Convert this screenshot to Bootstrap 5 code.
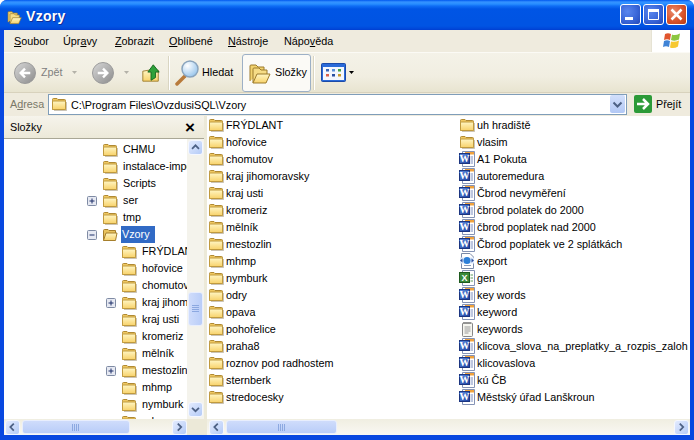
<!DOCTYPE html>
<html lang="cs">
<head>
<meta charset="utf-8">
<title>Vzory</title>
<link href="https://cdn.jsdelivr.net/npm/bootstrap@5.3.0/dist/css/bootstrap.min.css" rel="stylesheet">
<style>
html,body{margin:0;padding:0;background:#fff;overflow:hidden}
body{width:694px;height:440px;font-family:"Liberation Sans",sans-serif;font-size:10.8px;line-height:17px;color:#000}
u{text-decoration:underline;text-underline-offset:1px}
.xpwin{width:694px;height:440px;background:#0848e0;border-radius:7px 7px 0 0;overflow:hidden}
.xptitle{height:30px;flex:none;background:linear-gradient(180deg,#0058ee 0,#3593ff 2px,#288eff 4px,#0f6ef5 6px,#0055e5 9px,#0054e3 20px,#0054e3 26px,#0046d8 29px,#003dd0 30px);padding:3px 0 0 6px;color:#fff}
.xptitle-text{font-family:"Liberation Sans",sans-serif;font-weight:700;font-size:14px;margin-left:4px;text-shadow:1px 1px 0 #0f2f9a;letter-spacing:.3px}
.capbtns{margin-left:auto;margin-right:7px;gap:2px;margin-top:-4px}
.capbtn{width:21px;height:21px;border:1px solid #fff;border-radius:3px;background:radial-gradient(circle at 35% 35%,#5a86ee 0,#3a66d8 55%,#2348b8 100%)}
.capbtn-x{background:radial-gradient(circle at 35% 35%,#e88a6c 0,#d9542b 55%,#b73a14 100%)}
.xpbody{flex:1 1 auto;min-height:0;margin:0 4px 5px;background:#ece9d8}
.menubar{height:23px;flex:none;background:#efebde;border-bottom:1px solid #fbfaf5}
.m1{width:59px;padding-left:10px;flex:none}
.m2{width:52px;flex:none}
.m3{width:54px;flex:none}
.m4{width:59px;flex:none}
.m5{width:56px;flex:none}
.flagbox{margin-left:auto;width:39px;height:22px;background:#fff;border-left:1px solid #e6e3d4}
.toolbar{height:40px;flex:none;background:linear-gradient(180deg,#f4f2e8 0,#f1eee1 60%,#e8e4d0 100%);border-bottom:1px solid #d8d2bd}
.gray-label{color:#808080}
.tbsep{width:2px;height:34px;background:#d9d5c2;border-right:1px solid #fff;flex:none}
.t-back{margin-left:10px}
.t-zpet{margin-left:5px;width:21px;flex:none}
.t-tri1{margin-left:10px}
.t-fwd{margin-left:15px}
.t-tri2{margin-left:10px}
.t-up{margin-left:12px}
.t-sep1{margin-left:7px}
.t-search{margin-left:5px}
.t-hledat{margin-left:2px;width:40px;flex:none}
.t-sep2{margin-left:2px}
.t-views{margin-left:6px}
.t-tri3{margin-left:3px}
.tb-slozky{width:69px;height:38px;background:#fbfaf6;border:1px solid #9db0c6;border-radius:3px;flex:none;padding-left:4px}
.addr{height:23px;flex:none;background:#efebde;border-bottom:1px solid #efebde}
.addr-label{width:44px;padding-left:6px;color:#7a7868;flex:none}
.addr-path{height:17px;line-height:19px}
.addr-input{width:579px;height:21px;background:#fff;border:1px solid #7f9db9;flex:none;padding-left:2px}
.addr-combo{width:15px;height:18px;margin-left:auto;margin-right:1px;background:linear-gradient(180deg,#d3e0fb,#b2c8f5);border-radius:2px}
.gobtn{padding-left:7px}
.panes{flex:1 1 auto;min-height:0}
.leftpane{width:200px;flex:none}
.splitter{width:3px;background:#ece9d8;flex:none}
.rightpane{flex:1 1 auto;min-width:0;background:#fff}
.phead{height:23px;background:linear-gradient(180deg,#f6f4ec,#ece9d8);border-bottom:1px solid #a9a795;padding-left:6px;padding-right:9px;flex:none}
.phead-x{font-family:"Liberation Sans",sans-serif;font-size:17px;font-weight:700;margin-left:auto;line-height:17px}
.treewrap{flex:1 1 auto;min-height:0;background:#fff}
.treeclip{width:183px;overflow:hidden;padding-top:2px;flex:none}
.trow{height:17px;white-space:nowrap}
.lv1{padding-left:83px}
.lv2{padding-left:102px}
.expslot{width:15px;flex:none}
.expbox{width:10px;height:10px}
.tname{margin-left:4px;padding:0 1px}
.tname-sel{background:#316ac5;color:#fff;margin-left:3px;padding:0 2px 0 1px;width:34px;flex:none}
.vscroll{width:17px;flex:none;background:#f4f3ec;padding:1px}
.sbtn{width:15px;height:15px;flex:none;background:linear-gradient(135deg,#e3ebfe,#b4cbf7);border:1px solid #f4f7ff;border-radius:3px}
.vthumb{width:15px;height:34px;background:linear-gradient(90deg,#cfdcfb,#b9cdf8);border:1px solid #e8eefd;border-radius:3px;margin-top:137px;margin-bottom:76px;flex:none}
.hbar{height:16px;flex:none;background:linear-gradient(180deg,#f0eee1,#f9f8f3)}
.hthumb-l{width:108px;height:14px;margin-left:2px;margin-right:42px}
.hthumb-r{width:111px;height:14px;margin-left:2px;margin-right:337px}
.hthumb{background:linear-gradient(180deg,#cfdcfb,#b9cdf8);border:1px solid #e8eefd;border-radius:3px;flex:none}
.hcorner{width:17px;height:16px;background:#ece9d8;flex:none}
.hbar-left{width:183px;flex:none;padding:1px}
.hbar-right{padding:1px 1px 1px 2px}
.filearea{flex:1 1 auto;min-height:0;padding-left:1px}
.fcol{width:251px;flex:none}
.frow{height:17px;white-space:nowrap}
.fname{margin-left:2px;height:17px;line-height:19px}
.ic16{width:16px;height:16px;flex:none}
.ic-up{width:20px;height:24px;flex:none}
.ic-search{width:25px;height:26px;flex:none}
.ic-views{width:25px;height:19px;flex:none}
.ic-big{width:24px;height:24px;flex:none}
.ic-circle{width:22px;height:22px;flex:none}
.ic-go{width:18px;height:18px;flex:none}
.tri{width:5px;height:3px;flex:none}
</style>
</head>
<body>
<svg width="0" height="0" class="d-block" aria-hidden="true">
<defs>
<linearGradient id="gf" x1="0" y1="0" x2="0" y2="1"><stop offset="0" stop-color="#fff6c4"/><stop offset="1" stop-color="#f8d26a"/></linearGradient>
<linearGradient id="gb" x1="0" y1="0" x2="1" y2="1"><stop offset="0" stop-color="#d8d8d8"/><stop offset="1" stop-color="#8b8b8b"/></linearGradient>
<radialGradient id="gg" cx=".35" cy=".3" r=".8"><stop offset="0" stop-color="#fff"/><stop offset="1" stop-color="#8fc0ea"/></radialGradient>
<linearGradient id="gw" x1="0" y1="0" x2="1" y2="1"><stop offset="0" stop-color="#5f8fe0"/><stop offset="1" stop-color="#1c3f9e"/></linearGradient>
<symbol id="fd" viewBox="0 0 16 16"><path d="M1.500 4.500V3.500Q1.500 2.500 2.500 2.500H6L7 3.500H13.500Q14.500 3.500 14.500 4.500V13.500H1.500Z" fill="#f0c860" stroke="#b08a34"/><rect x="1.500" y="5" width="13" height="8.500" rx="1" fill="url(#gf)" stroke="#c09a3e"/><path d="M3 14.500H15.500V6" fill="none" stroke="#a0937a" stroke-opacity=".55"/></symbol>
<symbol id="fp" viewBox="0 0 16 16"><path d="M1.500 13.500V3.500Q1.500 2.500 2.500 2.500H6L7 3.500H13.500V6" fill="#e8c25c" stroke="#a67f2c"/><path d="M1.500 13.500L4 6H15L13.500 13.500Z" fill="url(#gf)" stroke="#a67f2c"/></symbol>
<symbol id="fo" viewBox="0 0 24 24"><path d="M3 20V5Q3 4 4 4H9L11 6H17V9" fill="#f2d36f" stroke="#9c7a2c"/><path d="M6 22V8Q6 7 7 7H12L14 9H20V14" fill="#f6dc86" stroke="#9c7a2c"/><path d="M6 22L10 13H23L19 22Z" fill="url(#gf)" stroke="#9c7a2c"/></symbol>
<symbol id="wd" viewBox="0 0 16 16"><path d="M3.500 .5H15.500V15.500H3.500Z" fill="#fff" stroke="#8593b5"/><path d="M6 1H15V3.500H6Z" fill="#f0a23c"/><path d="M11.500 6H14M11.500 8H14M11.500 10H14M11.500 12H14" stroke="#7d8fc0"/><rect x=".5" y="2.500" width="10" height="10" fill="url(#gw)" stroke="#1c3580"/><text x="5.500" y="11" text-anchor="middle" font-family="Liberation Serif" font-weight="700" font-size="10" fill="#fff">W</text></symbol>
<symbol id="xl" viewBox="0 0 16 16"><path d="M3.500 .5H15.500V15.500H3.500Z" fill="#fff" stroke="#8593b5"/><path d="M11.500 5H14M11.500 8H14M11.500 11H14" stroke="#5c9c5c"/><rect x=".5" y="2.500" width="10" height="10" fill="#3a8a3a" stroke="#1e5a1e"/><text x="5.500" y="11" text-anchor="middle" font-family="Liberation Sans" font-weight="700" font-size="9" fill="#fff">X</text></symbol>
<symbol id="ex" viewBox="0 0 16 16"><path d="M2.500 .5H11L14.500 4V15.500H2.500Z" fill="#fff" stroke="#7b8aa8"/><rect x="1" y="4.500" width="14" height="6" fill="#dce8f9"/><circle cx="8" cy="7.500" r="3.500" fill="#2c7fd8"/><path d="M1 7.500L3.500 5.500V9.500ZM15 7.500L12.500 5.500V9.500Z" fill="#2a4ea0"/><path d="M5 12.500H12" stroke="#8a9ab8"/></symbol>
<symbol id="np" viewBox="0 0 16 16"><rect x="3.500" y="2" width="10" height="13.500" rx="1" fill="#f6f6f0" stroke="#878787"/><path d="M5 1V3M7 1V3M9 1V3M11 1V3" stroke="#666"/><path d="M5.500 6H11.500M5.500 8H11.500M5.500 10H11.500M5.500 12H9.500" stroke="#9a9a9a"/></symbol>
<symbol id="up" viewBox="0 0 10 10"><rect x=".5" y=".5" width="9" height="9" fill="#e6e9f2" stroke="#7f8ba4" rx="1"/><path d="M5 2.500V7.500M2.500 5H7.500" stroke="#1c2f68"/></symbol>
<symbol id="mi" viewBox="0 0 10 10"><rect x=".5" y=".5" width="9" height="9" fill="#e6e9f2" stroke="#7f8ba4" rx="1"/><path d="M2.500 5H7.500" stroke="#1c2f68"/></symbol>
<symbol id="cu" viewBox="0 0 15 15"><path d="M3.500 9L7.500 5L11.500 9" fill="none" stroke="#4d6185" stroke-width="2"/></symbol>
<symbol id="cd" viewBox="0 0 15 15"><path d="M3.500 5.500L7.500 9.500L11.500 5.500" fill="none" stroke="#4d6185" stroke-width="2"/></symbol>
<symbol id="cl" viewBox="0 0 15 15"><path d="M9 3L5 7L9 11" fill="none" stroke="#4d6185" stroke-width="2"/></symbol>
<symbol id="cr" viewBox="0 0 15 15"><path d="M5.500 3L9.500 7L5.500 11" fill="none" stroke="#4d6185" stroke-width="2"/></symbol>
<symbol id="tr" viewBox="0 0 5 3"><path d="M0 0H5L2.500 3Z"/></symbol>
</defs>
</svg>
<div class="xpwin d-flex flex-column">
  <div class="xptitle d-flex align-items-center">
    <svg class="ic16"><use href="#fo"/></svg>
    <span class="xptitle-text">Vzory</span>
    <div class="capbtns d-flex">
      <div class="capbtn d-flex align-items-center justify-content-center"><svg width="19" height="19" viewBox="0 0 19 19"><rect x="4" y="12" width="8" height="3" fill="#fff"/></svg></div>
      <div class="capbtn d-flex align-items-center justify-content-center"><svg width="19" height="19" viewBox="0 0 19 19"><path d="M4.500 4.500H14.500V14.500H4.500Z" fill="none" stroke="#fff"/><rect x="4" y="4" width="11" height="3" fill="#fff"/></svg></div>
      <div class="capbtn capbtn-x d-flex align-items-center justify-content-center"><svg width="19" height="19" viewBox="0 0 19 19"><path d="M4.500 4.500L14.500 14.500M14.500 4.500L4.500 14.500" stroke="#fff" stroke-width="2.500"/></svg></div>
    </div>
  </div>
  <div class="xpbody d-flex flex-column">
    <div class="menubar d-flex align-items-center">
      <span class="m1"><u>S</u>oubor</span>
      <span class="m2">Úpr<u>a</u>vy</span>
      <span class="m3"><u>Z</u>obrazit</span>
      <span class="m4"><u>O</u>blíbené</span>
      <span class="m5"><u>N</u>ástroje</span>
      <span>Nápo<u>v</u>ěda</span>
      <div class="flagbox d-flex align-items-center justify-content-center">
        <svg width="21" height="19" viewBox="0 0 21 19"><path d="M4 2Q7 .5 10 2L9 8Q6 6.500 3 8Z" fill="#e0552e"/><path d="M11 2.500Q14 4 19 1.500L18 7.500Q14 9.500 10 8Z" fill="#8cc63f"/><path d="M3 9Q6 7.500 9 9L8 15Q5 13.500 2 15Z" fill="#3f83d6"/><path d="M10 9.500Q14 10.500 18 8.500L17 14.500Q13 17 9 15.500Z" fill="#f7c932"/></svg>
      </div>
    </div>
    <div class="toolbar d-flex align-items-center">
      <svg class="ic-circle t-back" viewBox="0 0 23 23"><circle cx="11.500" cy="11.500" r="11" fill="url(#gb)" stroke="#999"/><path d="M17 11.500H8M11.500 7L7 11.500L11.500 16" fill="none" stroke="#fff" stroke-width="2.500"/></svg>
      <span class="gray-label t-zpet">Zpět</span>
      <svg class="tri t-tri1 opacity-25"><use href="#tr"/></svg>
      <svg class="ic-circle t-fwd" viewBox="0 0 23 23"><circle cx="11.500" cy="11.500" r="11" fill="url(#gb)" stroke="#999"/><path d="M6 11.500H15M11.500 7L16 11.500L11.500 16" fill="none" stroke="#fff" stroke-width="2.500"/></svg>
      <svg class="tri t-tri2 opacity-25"><use href="#tr"/></svg>
      <svg class="ic-up t-up" viewBox="0 0 22 24"><path d="M2 21V10L8 9H19V21Z" fill="url(#gf)" stroke="#9c7a2c"/><path d="M11 20V11H7.500L13.500 3L20 11H16V17Z" fill="#2fa13a" stroke="#15661d"/></svg>
      <div class="tbsep t-sep1"></div>
      <svg class="ic-search t-search" viewBox="0 0 25 26"><path d="M10 16L2 24" stroke="#b87a3a" stroke-width="3.500" stroke-linecap="round"/><circle cx="15" cy="9" r="8" fill="url(#gg)" stroke="#8aa4bd" stroke-width="1.500"/></svg>
      <span class="t-hledat">Hledat</span>
      <div class="tb-slozky d-flex align-items-center"><svg class="ic-big"><use href="#fo"/></svg><span class="ms-1">Složky</span></div>
      <div class="tbsep t-sep2"></div>
      <svg class="ic-views t-views" viewBox="0 0 25 19"><rect x=".5" y=".5" width="24" height="18" rx="1" fill="#2a6ad8" stroke="#1c4ba8"/><rect x="2" y="4" width="21" height="13" fill="#f4f7fd"/><rect x="5" y="6" width="3" height="2.500" fill="#3a66b8"/><rect x="11" y="6" width="3" height="2.500" fill="#5a8fd8"/><rect x="17" y="6" width="3" height="2.500" fill="#3fa04a"/><rect x="5" y="11" width="3" height="2.500" fill="#d8604a"/><rect x="11" y="11" width="3" height="2.500" fill="#2a4ea0"/><rect x="17" y="11" width="3" height="2.500" fill="#c89a2a"/></svg>
      <svg class="tri t-tri3"><use href="#tr"/></svg>
    </div>
    <div class="addr d-flex align-items-center">
      <span class="addr-label">A<u>d</u>resa</span>
      <div class="addr-input d-flex align-items-center">
        <svg class="ic16"><use href="#fd"/></svg>
        <span class="ms-1 addr-path">C:\Program Files\OvzdusiSQL\Vzory</span>
        <div class="addr-combo d-flex align-items-center justify-content-center"><svg width="15" height="15"><use href="#cd"/></svg></div>
      </div>
      <div class="gobtn d-flex align-items-center">
        <svg class="ic-go" viewBox="0 0 18 18"><rect width="18" height="18" rx="2" fill="#2c9a38"/><path d="M3 9H13M9 4L14 9L9 14" fill="none" stroke="#fff" stroke-width="2.500"/></svg>
        <span class="ms-1">Přejít</span>
      </div>
    </div>
    <div class="panes d-flex">
      <div class="leftpane d-flex flex-column">
        <div class="phead d-flex align-items-center"><span>Složky</span><span class="phead-x">×</span></div>
        <div class="treewrap d-flex">
          <div class="treeclip">
            <div class="trow lv1 d-flex align-items-center"><span class="expslot"></span><svg class="ic16"><use href="#fd"/></svg><span class="tname">CHMU</span></div>
            <div class="trow lv1 d-flex align-items-center"><span class="expslot"></span><svg class="ic16"><use href="#fd"/></svg><span class="tname">instalace-import</span></div>
            <div class="trow lv1 d-flex align-items-center"><span class="expslot"></span><svg class="ic16"><use href="#fd"/></svg><span class="tname">Scripts</span></div>
            <div class="trow lv1 d-flex align-items-center"><span class="expslot"><svg class="expbox d-block"><use href="#up"/></svg></span><svg class="ic16"><use href="#fd"/></svg><span class="tname">ser</span></div>
            <div class="trow lv1 d-flex align-items-center"><span class="expslot"></span><svg class="ic16"><use href="#fd"/></svg><span class="tname">tmp</span></div>
            <div class="trow lv1 d-flex align-items-center"><span class="expslot"><svg class="expbox d-block"><use href="#mi"/></svg></span><svg class="ic16"><use href="#fp"/></svg><span class="tname-sel">Vzory</span></div>
            <div class="trow lv2 d-flex align-items-center"><span class="expslot"></span><svg class="ic16"><use href="#fd"/></svg><span class="tname">FRÝDLANT</span></div>
            <div class="trow lv2 d-flex align-items-center"><span class="expslot"></span><svg class="ic16"><use href="#fd"/></svg><span class="tname">hořovice</span></div>
            <div class="trow lv2 d-flex align-items-center"><span class="expslot"></span><svg class="ic16"><use href="#fd"/></svg><span class="tname">chomutov</span></div>
            <div class="trow lv2 d-flex align-items-center"><span class="expslot"><svg class="expbox d-block"><use href="#up"/></svg></span><svg class="ic16"><use href="#fd"/></svg><span class="tname">kraj jihomoravsky</span></div>
            <div class="trow lv2 d-flex align-items-center"><span class="expslot"></span><svg class="ic16"><use href="#fd"/></svg><span class="tname">kraj usti</span></div>
            <div class="trow lv2 d-flex align-items-center"><span class="expslot"></span><svg class="ic16"><use href="#fd"/></svg><span class="tname">kromeriz</span></div>
            <div class="trow lv2 d-flex align-items-center"><span class="expslot"></span><svg class="ic16"><use href="#fd"/></svg><span class="tname">mělník</span></div>
            <div class="trow lv2 d-flex align-items-center"><span class="expslot"><svg class="expbox d-block"><use href="#up"/></svg></span><svg class="ic16"><use href="#fd"/></svg><span class="tname">mestozlin</span></div>
            <div class="trow lv2 d-flex align-items-center"><span class="expslot"></span><svg class="ic16"><use href="#fd"/></svg><span class="tname">mhmp</span></div>
            <div class="trow lv2 d-flex align-items-center"><span class="expslot"></span><svg class="ic16"><use href="#fd"/></svg><span class="tname">nymburk</span></div>
            <div class="trow lv2 d-flex align-items-center"><span class="expslot"></span><svg class="ic16"><use href="#fd"/></svg><span class="tname">odry</span></div>
          </div>
          <div class="vscroll d-flex flex-column">
            <div class="sbtn d-flex align-items-center justify-content-center"><svg width="13" height="13" viewBox="0 0 15 15"><use href="#cu"/></svg></div>
            <div class="vthumb d-flex align-items-center justify-content-center"><svg width="7" height="8"><path d="M0 .5H7M0 2.500H7M0 4.500H7M0 6.500H7" stroke="#8ca8e0"/></svg></div>
            <div class="sbtn d-flex align-items-center justify-content-center"><svg width="13" height="13" viewBox="0 0 15 15"><use href="#cd"/></svg></div>
          </div>
        </div>
        <div class="hbar d-flex">
          <div class="hbar-left d-flex">
            <div class="sbtn d-flex align-items-center justify-content-center"><svg width="13" height="13" viewBox="0 0 15 15"><use href="#cl"/></svg></div>
            <div class="hthumb hthumb-l d-flex align-items-center justify-content-center"><svg width="8" height="7"><path d="M.5 0V7M2.500 0V7M4.500 0V7M6.500 0V7" stroke="#8ca8e0"/></svg></div>
            <div class="sbtn d-flex align-items-center justify-content-center"><svg width="13" height="13" viewBox="0 0 15 15"><use href="#cr"/></svg></div>
          </div>
          <div class="hcorner"></div>
        </div>
      </div>
      <div class="splitter"></div>
      <div class="rightpane d-flex flex-column">
        <div class="filearea d-flex">
          <div class="fcol">
            <div class="frow d-flex align-items-center"><svg class="ic16"><use href="#fd"/></svg><span class="fname">FRÝDLANT</span></div>
            <div class="frow d-flex align-items-center"><svg class="ic16"><use href="#fd"/></svg><span class="fname">hořovice</span></div>
            <div class="frow d-flex align-items-center"><svg class="ic16"><use href="#fd"/></svg><span class="fname">chomutov</span></div>
            <div class="frow d-flex align-items-center"><svg class="ic16"><use href="#fd"/></svg><span class="fname">kraj jihomoravsky</span></div>
            <div class="frow d-flex align-items-center"><svg class="ic16"><use href="#fd"/></svg><span class="fname">kraj usti</span></div>
            <div class="frow d-flex align-items-center"><svg class="ic16"><use href="#fd"/></svg><span class="fname">kromeriz</span></div>
            <div class="frow d-flex align-items-center"><svg class="ic16"><use href="#fd"/></svg><span class="fname">mělník</span></div>
            <div class="frow d-flex align-items-center"><svg class="ic16"><use href="#fd"/></svg><span class="fname">mestozlin</span></div>
            <div class="frow d-flex align-items-center"><svg class="ic16"><use href="#fd"/></svg><span class="fname">mhmp</span></div>
            <div class="frow d-flex align-items-center"><svg class="ic16"><use href="#fd"/></svg><span class="fname">nymburk</span></div>
            <div class="frow d-flex align-items-center"><svg class="ic16"><use href="#fd"/></svg><span class="fname">odry</span></div>
            <div class="frow d-flex align-items-center"><svg class="ic16"><use href="#fd"/></svg><span class="fname">opava</span></div>
            <div class="frow d-flex align-items-center"><svg class="ic16"><use href="#fd"/></svg><span class="fname">pohořelice</span></div>
            <div class="frow d-flex align-items-center"><svg class="ic16"><use href="#fd"/></svg><span class="fname">praha8</span></div>
            <div class="frow d-flex align-items-center"><svg class="ic16"><use href="#fd"/></svg><span class="fname">roznov pod radhostem</span></div>
            <div class="frow d-flex align-items-center"><svg class="ic16"><use href="#fd"/></svg><span class="fname">sternberk</span></div>
            <div class="frow d-flex align-items-center"><svg class="ic16"><use href="#fd"/></svg><span class="fname">stredocesky</span></div>
          </div>
          <div class="fcol">
            <div class="frow d-flex align-items-center"><svg class="ic16"><use href="#fd"/></svg><span class="fname">uh hradiště</span></div>
            <div class="frow d-flex align-items-center"><svg class="ic16"><use href="#fd"/></svg><span class="fname">vlasim</span></div>
            <div class="frow d-flex align-items-center"><svg class="ic16"><use href="#wd"/></svg><span class="fname">A1 Pokuta</span></div>
            <div class="frow d-flex align-items-center"><svg class="ic16"><use href="#wd"/></svg><span class="fname">autoremedura</span></div>
            <div class="frow d-flex align-items-center"><svg class="ic16"><use href="#wd"/></svg><span class="fname">Čbrod nevyměření</span></div>
            <div class="frow d-flex align-items-center"><svg class="ic16"><use href="#wd"/></svg><span class="fname">čbrod polatek do 2000</span></div>
            <div class="frow d-flex align-items-center"><svg class="ic16"><use href="#wd"/></svg><span class="fname">čbrod poplatek nad 2000</span></div>
            <div class="frow d-flex align-items-center"><svg class="ic16"><use href="#wd"/></svg><span class="fname">Čbrod poplatek ve 2 splátkách</span></div>
            <div class="frow d-flex align-items-center"><svg class="ic16"><use href="#ex"/></svg><span class="fname">export</span></div>
            <div class="frow d-flex align-items-center"><svg class="ic16"><use href="#xl"/></svg><span class="fname">gen</span></div>
            <div class="frow d-flex align-items-center"><svg class="ic16"><use href="#wd"/></svg><span class="fname">key words</span></div>
            <div class="frow d-flex align-items-center"><svg class="ic16"><use href="#wd"/></svg><span class="fname">keyword</span></div>
            <div class="frow d-flex align-items-center"><svg class="ic16"><use href="#np"/></svg><span class="fname">keywords</span></div>
            <div class="frow d-flex align-items-center"><svg class="ic16"><use href="#wd"/></svg><span class="fname">klicova_slova_na_preplatky_a_rozpis_zaloh</span></div>
            <div class="frow d-flex align-items-center"><svg class="ic16"><use href="#wd"/></svg><span class="fname">klicovaslova</span></div>
            <div class="frow d-flex align-items-center"><svg class="ic16"><use href="#wd"/></svg><span class="fname">kú ČB</span></div>
            <div class="frow d-flex align-items-center"><svg class="ic16"><use href="#wd"/></svg><span class="fname">Městský úřad Lanškroun</span></div>
          </div>
        </div>
        <div class="hbar hbar-right d-flex">
          <div class="sbtn d-flex align-items-center justify-content-center"><svg width="13" height="13" viewBox="0 0 15 15"><use href="#cl"/></svg></div>
          <div class="hthumb hthumb-r d-flex align-items-center justify-content-center"><svg width="8" height="7"><path d="M.5 0V7M2.500 0V7M4.500 0V7M6.500 0V7" stroke="#8ca8e0"/></svg></div>
          <div class="sbtn d-flex align-items-center justify-content-center"><svg width="13" height="13" viewBox="0 0 15 15"><use href="#cr"/></svg></div>
        </div>
      </div>
    </div>
  </div>
</div>
<script src="https://cdn.jsdelivr.net/npm/bootstrap@5.3.0/dist/js/bootstrap.bundle.min.js"></script>
</body>
</html>
